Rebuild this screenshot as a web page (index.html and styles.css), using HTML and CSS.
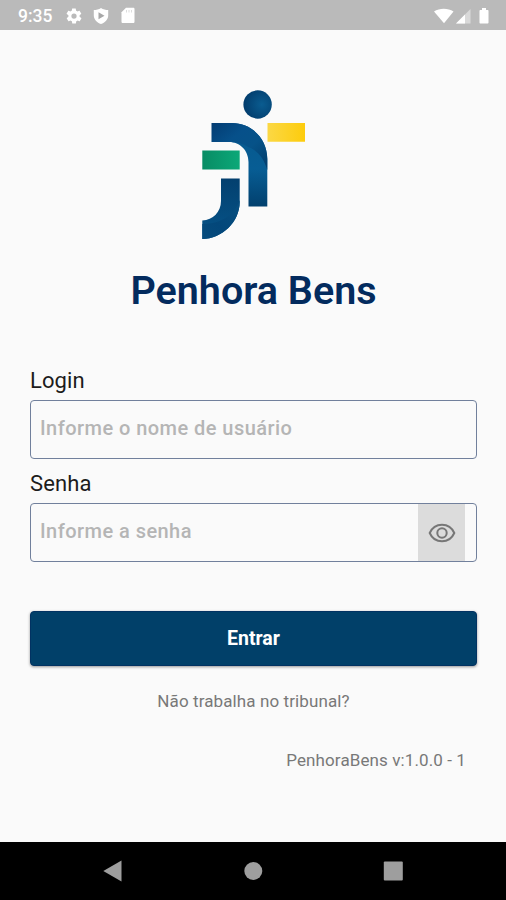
FILE: index.html
```html
<!DOCTYPE html>
<html lang="pt-BR">
<head>
    <meta charset="UTF-8">
    <meta name="viewport" content="width=device-width, initial-scale=1.0">
    <title>Penhora Bens</title>
    <link rel="stylesheet" href="styles.css">
</head>
<body>
    <header class="status-bar">
        <span class="time">9:35</span>
        <svg class="icon-gear" width="18" height="18" viewBox="0 0 24 24">
            <path fill="#fff" d="M19.4 13c0-.3.1-.6.1-1s0-.7-.1-1l2.1-1.6c.2-.2.2-.4.1-.6l-2-3.5c-.1-.2-.4-.3-.6-.2l-2.5 1c-.5-.4-1.1-.7-1.7-1l-.4-2.600c0-.2-.2-.4-.5-.4h-4c-.2 0-.5.2-.5.4l-.4 2.600c-.6.3-1.200.6-1.700 1l-2.500-1c-.2-.1-.5 0-.6.2l-2 3.500c-.1.2-.1.5.1.6L4.600 11c0 .3-.1.6-.1 1s0 .7.1 1l-2.100 1.600c-.2.2-.2.4-.1.6l2 3.500c.1.2.4.3.6.2l2.500-1c.5.4 1.100.7 1.700 1l.4 2.600c0 .2.3.4.5.4h4c.2 0 .5-.2.5-.4l.4-2.600c.6-.3 1.200-.6 1.700-1l2.500 1c.2.1.5 0 .6-.2l2-3.500c.1-.2.1-.5-.1-.6L19.400 13zM12 15.500a3.500 3.500 0 1 1 0-7 3.500 3.500 0 0 1 0 7z"/>
        </svg>
        <svg class="icon-shield" width="16" height="18" viewBox="0 0 16 18">
            <path fill="#fff" d="M8 1C6 2.500 3 3 .8 3v5.500c0 4 3.200 7.200 7.200 8.500 4-1.300 7.200-4.500 7.200-8.500V3C13 3 10 2.500 8 1z"/>
            <path fill="#a8a8a8" d="M5.500 5.300v7L11.500 8.800z"/>
        </svg>
        <svg class="icon-card" width="14" height="17" viewBox="0 0 14 17">
            <path fill="#fff" d="M5 .8h7.200c.8 0 1.300.5 1.300 1.300v12.600c0 .8-.5 1.300-1.300 1.300H1.800C1 16 .5 15.500.5 14.700V5.300z"/>
            <path stroke="#ddd" d="M5.500 3v2.500M8 3v2.500M10.500 3v2.500"/>
        </svg>
        <svg class="icon-signal" width="58" height="18" viewBox="0 0 58 18">
            <path fill="#fff" d="M0 4.500C5.500.8 14 .8 19.500 4.500L10 16.200z"/>
            <path fill="#d9d9d9" d="M36.500 2v14.500H22z"/>
            <path fill="#fff" d="M31 7.500v9h-9z"/>
            <path fill="#fff" d="M46.500 3H48V1H52V3h1.500c.6 0 1 .4 1 1v11.500c0 .6-.4 1-1 1h-7c-.6 0-1-.4-1-1V4c0-.6.400-1 1-1z"/>
        </svg>
    </header>

    <main class="container">
        <svg class="logo" width="104" height="150" viewBox="0 0 104 150">
            <defs>
                <radialGradient id="head" cx="65%" cy="50%" r="65%">
                    <stop offset="0" stop-color="#0a5c90"/>
                    <stop offset="1" stop-color="#023c6c"/>
                </radialGradient>
                <linearGradient id="arm" x1="0" y1="0" x2="1" y2="1">
                    <stop offset="0" stop-color="#033c72"/>
                    <stop offset=".35" stop-color="#06508a"/>
                    <stop offset=".6" stop-color="#065288"/>
                    <stop offset="1" stop-color="#023c6a"/>
                </linearGradient>
                <linearGradient id="body" x1="0" y1="0" x2="0" y2="1">
                    <stop offset="0" stop-color="#07588d"/>
                    <stop offset=".55" stop-color="#075d94"/>
                    <stop offset="1" stop-color="#02406e"/>
                </linearGradient>
                <linearGradient id="shin" x1="0" y1="0" x2="0" y2="1">
                    <stop offset="0" stop-color="#03406f"/>
                    <stop offset="1" stop-color="#065489"/>
                </linearGradient>
                <linearGradient id="leg" x1="1" y1="0" x2="0" y2="1">
                    <stop offset="0" stop-color="#084f80"/>
                    <stop offset=".6" stop-color="#03477a"/>
                    <stop offset="1" stop-color="#064b7c"/>
                </linearGradient>
                <linearGradient id="yellow">
                    <stop offset="0" stop-color="#fbd845"/>
                    <stop offset="1" stop-color="#fdcc0c"/>
                </linearGradient>
                <linearGradient id="green">
                    <stop offset="0" stop-color="#088c64"/>
                    <stop offset="1" stop-color="#0ca878"/>
                </linearGradient>
            </defs>
            <circle cx="55.600" cy="14.500" r="14.200" fill="url(#head)"/>
            <path fill="url(#body)" d="M30 33C50 33 65.300 49 65.300 69v47.500H46.500V72C46.500 60.500 38 52 27 52z"/>
            <path fill="url(#arm)" d="M9.500 33H30C50 33 65.300 49 65.300 69V80C62 68 55 60 46 57C41 53.500 35 52 27 52H9.500z"/>
            <path fill="url(#yellow)" d="M65.500 33H103v18.800H65.500z"/>
            <path fill="url(#green)" d="M.3 60.500H37.700v19H.3z"/>
            <path fill="url(#shin)" d="M19 88.500H37.700V112C37.700 132 20 148.800.3 149V130.500C11 130 19 122 19 111z"/>
            <path fill="url(#leg)" d="M37.700 110V112C37.700 132 20 148.800.3 149V134C20 134 33 124 37.700 110z"/>
        </svg>

        <h1>Penhora Bens</h1>

        <form>
            <label for="login">Login</label>
            <div class="field">
                <input type="text" id="login" name="login" placeholder="Informe o nome de usuário">
            </div>

            <label for="senha">Senha</label>
            <div class="field">
                <input type="password" id="senha" name="senha" placeholder="Informe a senha">
                <button type="button" class="show-password" aria-label="Mostrar senha">
                    <svg width="28" height="20" viewBox="0 0 28 20">
                        <g fill="none" stroke="#777" stroke-width="2">
                            <path d="M1.700 10C4 4.800 8.600 1.700 14 1.700S24 4.800 26.300 10C24 15.200 19.400 18.300 14 18.300S4 15.200 1.700 10z"/>
                            <circle cx="14" cy="10" r="4.700"/>
                        </g>
                    </svg>
                </button>
            </div>

            <button type="submit" class="submit">Entrar</button>
        </form>

        <a class="help">Não trabalha no tribunal?</a>
        <p class="version">PenhoraBens v:1.0.0 - 1</p>
    </main>

    <footer class="nav-bar">
        <svg width="20" height="22" viewBox="0 0 20 22"><path fill="#9e9e9e" d="M18.500 .5v21L.3 11z"/></svg>
        <svg width="20" height="20" viewBox="0 0 20 20"><circle cx="10.300" cy="10" r="9" fill="#9e9e9e"/></svg>
        <svg width="20" height="20" viewBox="0 0 20 20"><rect x=".8" y=".5" width="19" height="19" rx="1" fill="#9e9e9e"/></svg>
    </footer>
</body>
</html>
```
FILE: styles.css
```css
* {
    box-sizing: border-box;
}

body {
    font-family: Roboto, sans-serif;
    margin: 0;
    height: 900px;
    display: flex;
    flex-direction: column;
    background-color: #fafafa;
    overflow: hidden;
}

svg {
    display: block;
    flex: none;
}

.status-bar {
    display: flex;
    align-items: center;
    height: 30px;
    padding: 1px 14px 0 18px;
    background-color: #bababa;
}

.time {
    width: 47px;
    color: #fff;
    font-size: 17.5px;
    font-weight: 500;
}

.icon-shield {
    margin-left: 10px;
}

.icon-card {
    margin-left: 12px;
}

.icon-signal {
    margin-left: auto;
}

.container {
    flex: 1;
    display: flex;
    flex-direction: column;
    padding: 60px 29px 0 30px;
}

.logo {
    margin-left: 172px;
}

h1 {
    margin: 27px 0 0;
    text-align: center;
    color: #032b5e;
    font-size: 39.5px;
    line-height: 48px;
    font-weight: 600;
}

form {
    display: flex;
    flex-direction: column;
    margin-top: 51px;
}

label {
    color: #1c1c1c;
    font-size: 22px;
    line-height: 30px;
    margin-bottom: 4px;
    letter-spacing: 0.1px;
}

.field {
    display: flex;
    height: 59px;
    margin-bottom: 10px;
    padding-right: 11px;
    border: 1px solid #71809c;
    border-radius: 4px;
}

input {
    flex: 1;
    min-width: 0;
    padding: 0 9px 3px;
    border: none;
    outline: none;
    background: none;
    font-family: inherit;
    font-size: 20px;
    font-weight: 500;
    letter-spacing: 0.45px;
}

input::placeholder {
    color: #b5b5b5;
}

.show-password {
    display: flex;
    align-items: center;
    justify-content: center;
    width: 47px;
    padding: 0;
    border: none;
    background-color: #dcdcdc;
}

.submit {
    height: 55px;
    margin-top: 39px;
    border: 1px solid #023262;
    border-radius: 4px;
    background-color: #014069;
    box-shadow: 0 1px 3px rgba(0, 0, 0, 0.4);
    color: #fff;
    font-family: inherit;
    font-size: 19.5px;
    font-weight: 700;
}

.help {
    margin-top: 24px;
    text-align: center;
    color: #787878;
    font-size: 17px;
    line-height: 22px;
    letter-spacing: 0.1px;
}

.version {
    margin: 37px 11px 0 0;
    text-align: right;
    color: #787878;
    font-size: 17px;
    line-height: 22px;
    letter-spacing: 0.1px;
}

.nav-bar {
    display: flex;
    align-items: center;
    justify-content: space-between;
    height: 58px;
    padding: 0 103px;
    background-color: #000;
}
```
